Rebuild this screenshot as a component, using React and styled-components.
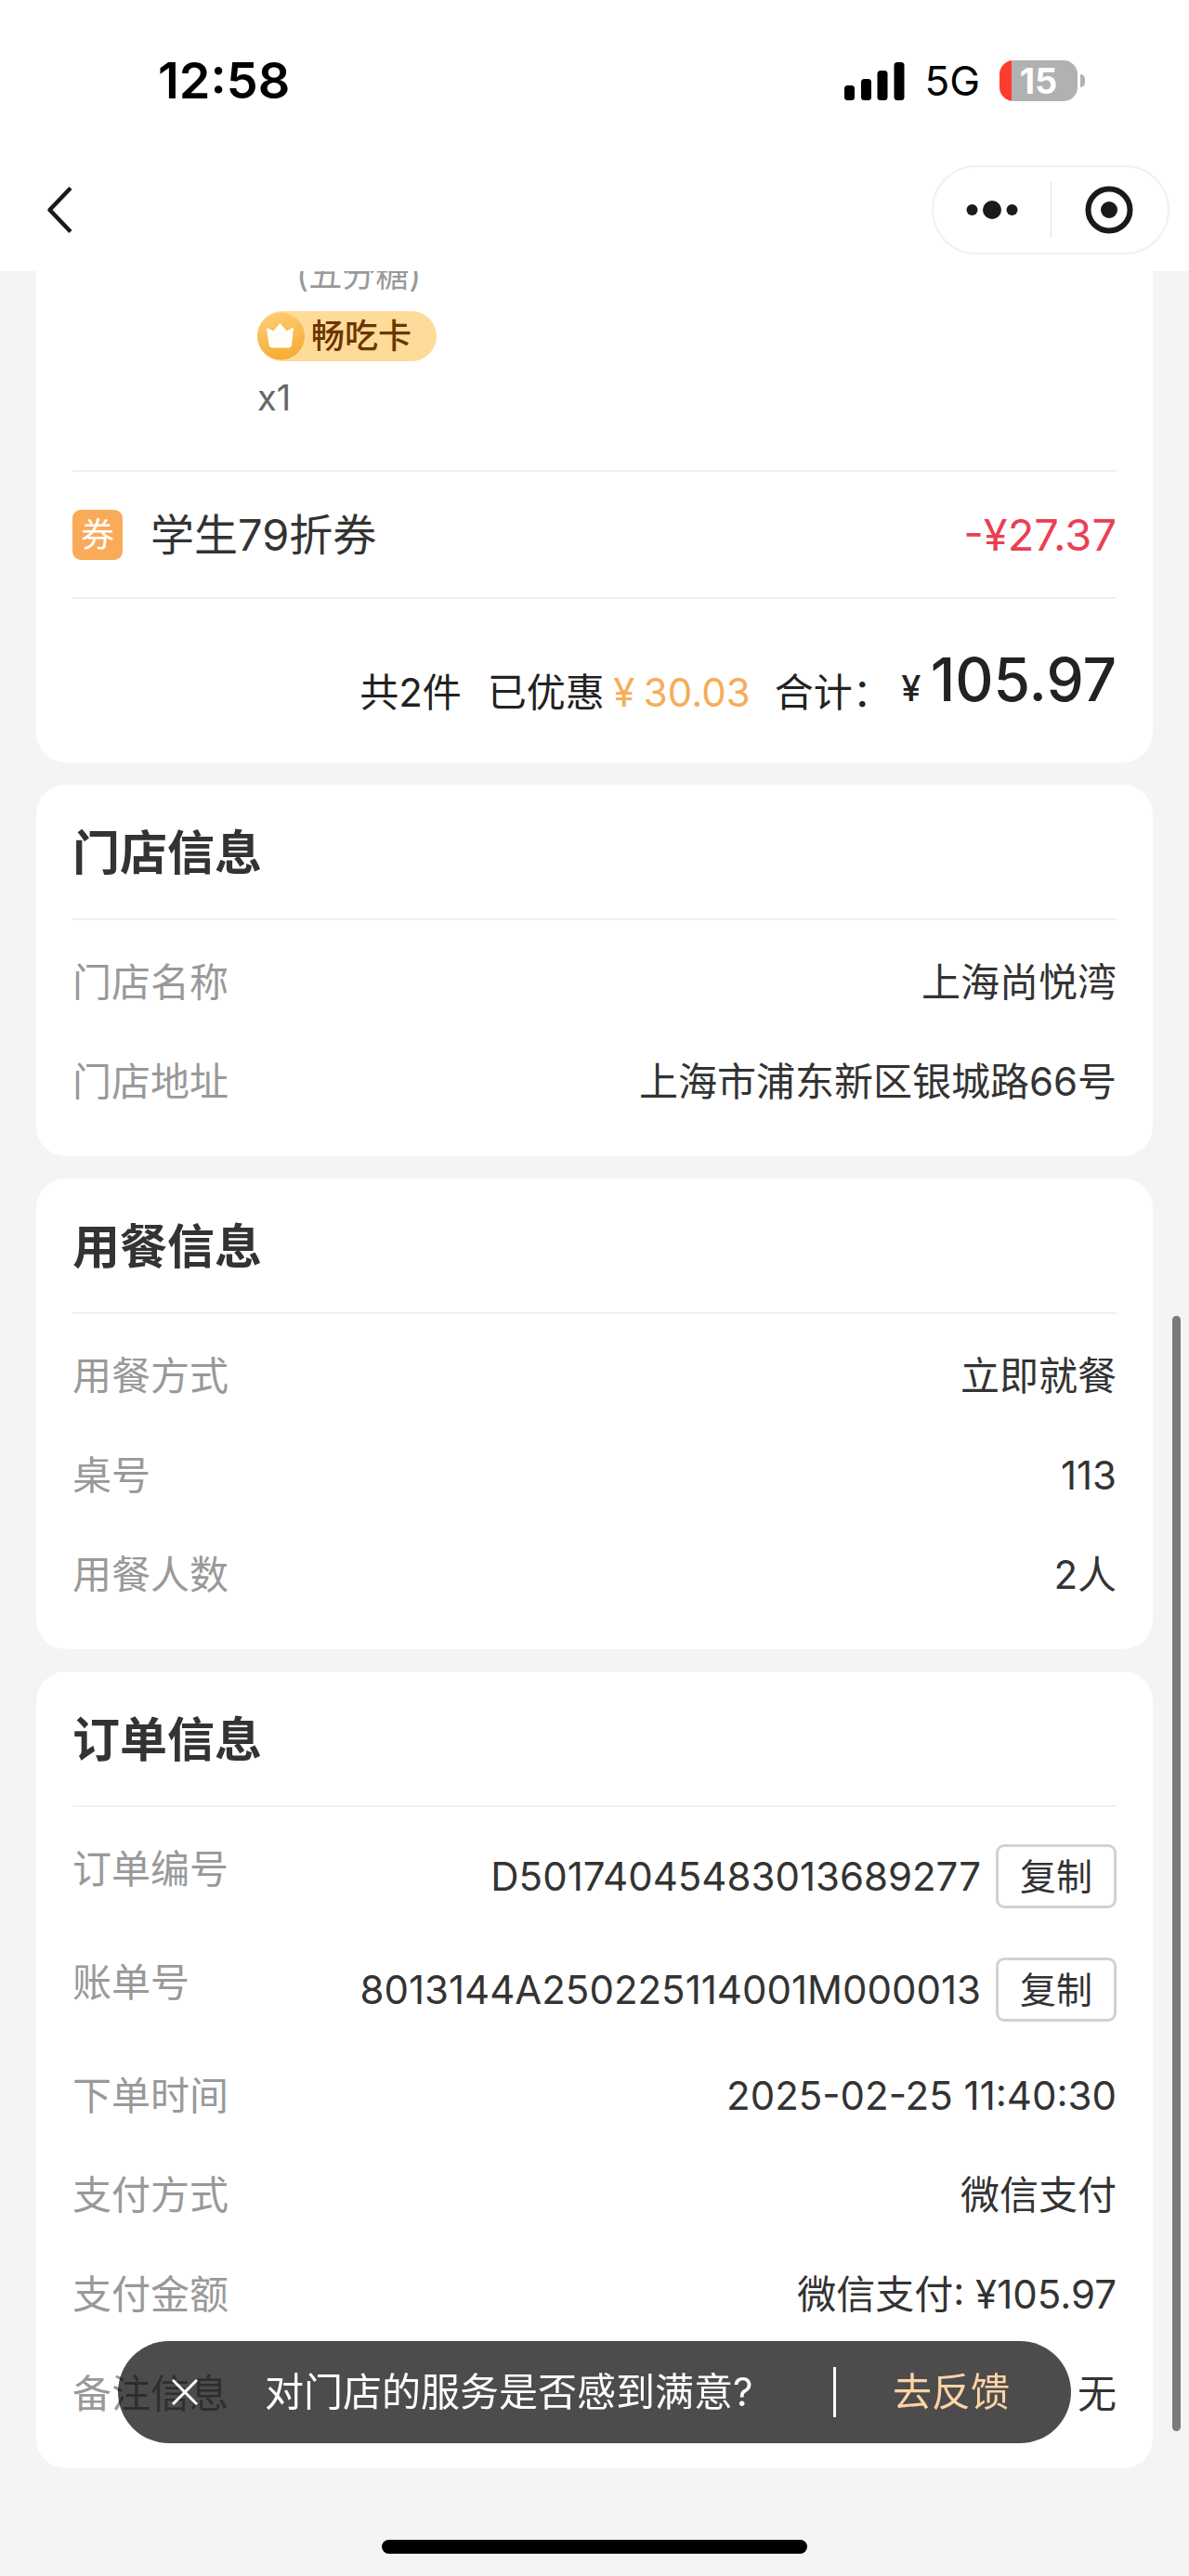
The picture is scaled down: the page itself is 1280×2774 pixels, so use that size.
import styled, { createGlobalStyle, ThemeProvider } from 'styled-components';

const theme = {
  page: '#f4f4f4',
  card: '#ffffff',
  line: '#f0f0f0',
  text: '#333333',
  dark: '#222222',
  muted: '#999999',
  orange: '#f5ad58',
  red: '#ea4052',
};

const GlobalStyle = createGlobalStyle`
  * {
    box-sizing: border-box;
  }

  body {
    margin: 0;
    background: #f4f4f4;
    font-family: Inter, 'Noto Sans CJK SC', sans-serif;
    font-size: 42px;
    line-height: 54px;
  }

  button {
    font-family: inherit;
    cursor: pointer;
  }
`;

const Page = styled.div`
  min-height: 100vh;
  display: flex;
  flex-direction: column;
  background: ${({ theme }) => theme.page};
  color: ${({ theme }) => theme.text};
`;

/* Header */
const Header = styled.header`
  background: #ffffff;
  padding-bottom: 14px;
`;

const StatusBar = styled.div`
  height: 174px;
  padding: 0 112px 0 170px;
  display: flex;
  align-items: center;
  justify-content: space-between;
  color: #000000;
`;

const Clock = styled.span`
  font-size: 54px;
  font-weight: 600;
`;

const StatusIcons = styled.div`
  display: flex;
  align-items: center;
  gap: 21px;
`;

const Network = styled.span`
  font-size: 44px;
`;

const Battery = styled.div`
  display: flex;
  align-items: center;
  gap: 3px;
`;

const BatteryBody = styled.div`
  width: 84px;
  height: 44px;
  border-radius: 15px;
  background: linear-gradient(to right, #ff3b30 13px, #b1b1b1 13px);
  color: #ffffff;
  font-size: 38px;
  font-weight: 700;
  line-height: 44px;
  text-align: center;
`;

const BatteryTip = styled.div`
  width: 5px;
  height: 14px;
  border-radius: 0 5px 5px 0;
  background: #b1b1b1;
`;

const NavBar = styled.nav`
  height: 104px;
  padding: 0 21px 0 40px;
  display: flex;
  align-items: center;
  justify-content: space-between;
`;

const IconButton = styled.button`
  display: flex;
  align-items: center;
  justify-content: center;
  padding: 0;
  border: none;
  background: none;
`;

const Capsule = styled.div`
  width: 256px;
  height: 96px;
  display: flex;
  align-items: center;
  border: 2px solid #f0f0f0;
  border-radius: 48px;

  ${IconButton} {
    flex: 1;
    height: 100%;
  }
`;

const CapsuleLine = styled.div`
  width: 1px;
  height: 60px;
  background: #e0e0e0;
`;

/* Content */
const Content = styled.main`
  flex: 1;
  display: flex;
  flex-direction: column;
  gap: 24px;
  padding: 0 39px 114px;
  overflow: hidden;
`;

const Card = styled.section`
  padding: 0 39px;
  background: ${({ theme }) => theme.card};
  border-radius: ${({ $open }) => ($open ? '0 0 32px 32px' : '32px')};
`;

const Item = styled.div`
  display: flex;
  flex-direction: column;
  align-items: flex-start;
  gap: 12px;
  margin-top: -23px;
  padding: 0 0 51px 199px;
  border-bottom: 2px solid ${({ theme }) => theme.line};
`;

const Spec = styled.span`
  padding-left: 42px;
  color: ${({ theme }) => theme.muted};
  font-size: 36px;
`;

const MemberTag = styled.span`
  height: 54px;
  display: flex;
  align-items: center;
  gap: 7px;
  padding-right: 27px;
  border-radius: 27px;
  background: #ffdb99;
  color: #6b3600;
  font-size: 36px;
  font-weight: 500;
`;

const Quantity = styled.span`
  color: #666666;
  font-size: 38px;
`;

const Coupon = styled.div`
  height: 137px;
  display: flex;
  align-items: center;
  border-bottom: 2px solid ${({ theme }) => theme.line};
  font-size: 47px;
`;

const CouponBadge = styled.span`
  width: 54px;
  height: 54px;
  margin-right: 30px;
  border-radius: 9px;
  background: #f9ab59;
  color: #ffffff;
  font-size: 36px;
  text-align: center;
`;

const CouponPrice = styled.span`
  margin-left: auto;
  color: ${({ theme }) => theme.red};
`;

const Total = styled.div`
  display: flex;
  align-items: flex-end;
  justify-content: flex-end;
  padding: 46px 0 48px;
  color: ${({ theme }) => theme.dark};
`;

const Count = styled.span`
  margin-right: 28px;
`;

const Yen = styled.span`
  width: 42px;
  line-height: 54px;
  text-align: center;
`;

const Saved = styled.span`
  display: flex;
  align-items: baseline;
  margin-right: 26px;
  color: ${({ theme }) => theme.orange};
`;

const Amount = styled.strong`
  display: flex;
  align-items: baseline;
  font-size: 64px;
  font-weight: 500;
  line-height: 82px;

  ${Yen} {
    font-size: 38px;
  }
`;

const Title = styled.h2`
  margin: 0;
  padding-top: 4px;
  border-bottom: 2px solid ${({ theme }) => theme.line};
  font-size: 51px;
  font-weight: 700;
  line-height: 140px;
`;

const Rows = styled.dl`
  display: flex;
  flex-direction: column;
  gap: 53px;
  margin: 0;
  padding: 40px 0 53px;
`;

const Row = styled.div`
  display: flex;
  align-items: flex-start;
  justify-content: space-between;
`;

const Label = styled.dt`
  color: ${({ theme }) => theme.muted};
`;

const Value = styled.dd`
  display: flex;
  align-items: center;
  gap: 16px;
  margin: 0;
`;

const CopyButton = styled.button`
  height: 69px;
  padding: 0 23px;
  border: 3px solid #d2d2d2;
  border-radius: 9px;
  background: #ffffff;
  color: ${({ theme }) => theme.text};
  font-size: 39px;
  line-height: 54px;
`;

/* Floating parts */
const Feedback = styled.div`
  position: fixed;
  right: 127px;
  bottom: 143px;
  left: 127px;
  height: 110px;
  display: flex;
  align-items: center;
  padding: 0 66px 0 58px;
  border-radius: 55px;
  background: rgba(0, 0, 0, 0.7);
  color: #ffffff;
`;

const Question = styled.span`
  margin-left: 72px;
`;

const FeedbackLine = styled.span`
  width: 3px;
  height: 54px;
  margin-right: 61px;
  margin-left: auto;
  background: #ffffff;
`;

const FeedbackLink = styled.a`
  color: #ffd3a3;
  text-decoration: none;
`;

const ScrollThumb = styled.div`
  position: fixed;
  right: 9px;
  bottom: 156px;
  width: 9px;
  height: 1201px;
  border-radius: 5px;
  background: #7b7b7b;
`;

const HomeIndicator = styled.div`
  position: fixed;
  bottom: 24px;
  left: 50%;
  width: 458px;
  height: 15px;
  margin-left: -229px;
  border-radius: 8px;
  background: #000000;
`;

const SignalIcon = () => (
  <svg width="65" height="41" viewBox="0 0 65 41" aria-hidden="true">
    <rect x="0" y="25" width="11" height="16" rx="3.5" />
    <rect x="18" y="18" width="11" height="23" rx="3.5" />
    <rect x="35.500" y="9" width="11" height="32" rx="3.5" />
    <rect x="53.500" y="0" width="11" height="41" rx="3.5" />
  </svg>
);

const BackIcon = () => (
  <svg width="50" height="60" viewBox="0 0 50 60" fill="none" stroke="#1a1a1a" strokeWidth="4.500">
    <path d="M36 6.500 13.500 30 36 53.500" strokeLinejoin="round" />
  </svg>
);

const MoreIcon = () => (
  <svg width="56" height="20" viewBox="0 0 56 20" fill="#1a1a1a">
    <circle cx="6.500" cy="10" r="6" />
    <circle cx="28" cy="10" r="10" />
    <circle cx="49.500" cy="10" r="6" />
  </svg>
);

const TargetIcon = () => (
  <svg width="52" height="52" viewBox="0 0 52 52" fill="none">
    <circle cx="26" cy="26" r="22.500" stroke="#1a1a1a" strokeWidth="6" />
    <circle cx="26" cy="26" r="9" fill="#1a1a1a" />
  </svg>
);

const CrownIcon = () => (
  <svg width="51" height="54" viewBox="0 0 51 54" aria-hidden="true">
    <defs>
      <linearGradient id="coin" x1="0" y1="0" x2="0.300" y2="1">
        <stop offset="0" stopColor="#ffcf7a" />
        <stop offset="1" stopColor="#f5ae38" />
      </linearGradient>
    </defs>
    <circle cx="25.500" cy="27" r="25.500" fill="url(#coin)" />
    <path
      d="M10.500 18.500 17.500 22 24.500 13.500 31.500 22 38.500 18 36.500 37Q36.200 39 34.200 39H15.500Q13.500 39 13.200 37Z"
      fill="#fffdf7"
      stroke="#fffdf7"
      strokeLinejoin="round"
    />
  </svg>
);

const CloseIcon = () => (
  <svg width="28" height="28" viewBox="0 0 28 28" stroke="#ffffff" strokeWidth="3">
    <path d="M1 1 27 27M27 1 1 27" />
  </svg>
);

const sections = [
  {
    title: '门店信息',
    rows: [
      { label: '门店名称', value: '上海尚悦湾' },
      { label: '门店地址', value: '上海市浦东新区银城路66号' },
    ],
  },
  {
    title: '用餐信息',
    rows: [
      { label: '用餐方式', value: '立即就餐' },
      { label: '桌号', value: '113' },
      { label: '用餐人数', value: '2人' },
    ],
  },
  {
    title: '订单信息',
    rows: [
      { label: '订单编号', value: 'D50174045483013689277', copy: true },
      { label: '账单号', value: '8013144A250225114001M000013', copy: true },
      { label: '下单时间', value: '2025-02-25 11:40:30' },
      { label: '支付方式', value: '微信支付' },
      { label: '支付金额', value: '微信支付: ¥105.97' },
      { label: '备注信息', value: '无' },
    ],
  },
];

const InfoCard = ({ title, rows }) => (
  <Card>
    <Title>{title}</Title>
    <Rows>
      {rows.map(({ label, value, copy }) => (
        <Row key={label}>
          <Label>{label}</Label>
          <Value>
            {value}
            {copy && <CopyButton type="button">复制</CopyButton>}
          </Value>
        </Row>
      ))}
    </Rows>
  </Card>
);

const App = () => {
  return (
    <ThemeProvider theme={theme}>
      <GlobalStyle />
      <Page>
        <Header>
          <StatusBar>
            <Clock>12:58</Clock>
            <StatusIcons>
              <SignalIcon />
              <Network>5G</Network>
              <Battery>
                <BatteryBody>15</BatteryBody>
                <BatteryTip />
              </Battery>
            </StatusIcons>
          </StatusBar>
          <NavBar>
            <IconButton type="button" aria-label="返回">
              <BackIcon />
            </IconButton>
            <Capsule>
              <IconButton type="button" aria-label="更多">
                <MoreIcon />
              </IconButton>
              <CapsuleLine />
              <IconButton type="button" aria-label="关闭小程序">
                <TargetIcon />
              </IconButton>
            </Capsule>
          </NavBar>
        </Header>

        <Content>
          <Card $open>
            <Item>
              <Spec>(五分糖)</Spec>
              <MemberTag>
                <CrownIcon />
                畅吃卡
              </MemberTag>
              <Quantity>x1</Quantity>
            </Item>
            <Coupon>
              <CouponBadge>券</CouponBadge>
              学生79折券
              <CouponPrice>-¥27.37</CouponPrice>
            </Coupon>
            <Total>
              <Count>共2件</Count>
              <span>已优惠</span>
              <Saved>
                <Yen>¥</Yen>30.03
              </Saved>
              <span>合计：</span>
              <Amount>
                <Yen>¥</Yen>105.97
              </Amount>
            </Total>
          </Card>
          {sections.map((section) => (
            <InfoCard key={section.title} {...section} />
          ))}
        </Content>
      </Page>

      <ScrollThumb />
      <Feedback>
        <IconButton type="button" aria-label="关闭">
          <CloseIcon />
        </IconButton>
        <Question>对门店的服务是否感到满意?</Question>
        <FeedbackLine />
        <FeedbackLink href="#feedback">去反馈</FeedbackLink>
      </Feedback>
      <HomeIndicator />
    </ThemeProvider>
  );
};

export default App;
